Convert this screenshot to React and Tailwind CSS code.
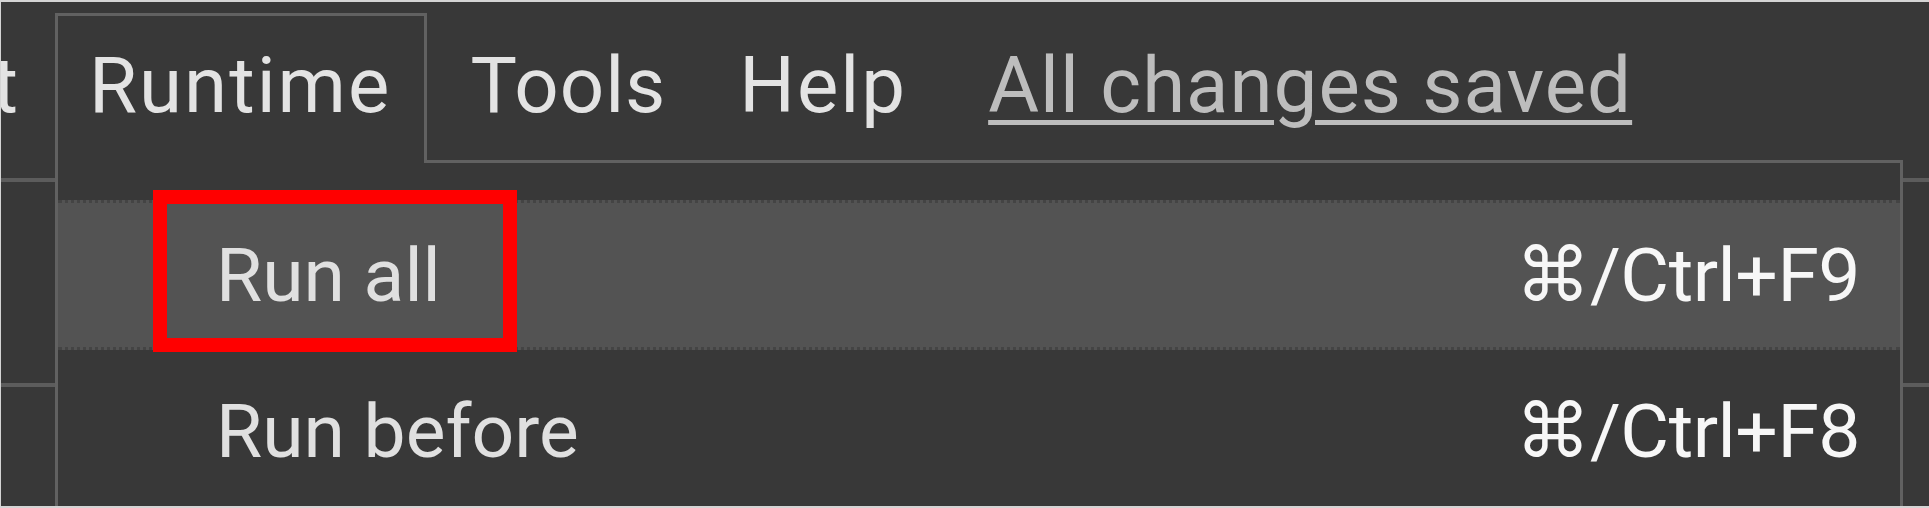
function SideStrip({ wide }) {
  return (
    <div className={wide ? 'flex-1 flex flex-col' : 'w-[54px] flex flex-col'}>
      <div className="h-[18px]" />
      <div className="h-[4px] bg-[#5c5c5c]" />
      <div className="h-[201px]" />
      <div className="h-[4px] bg-[#5c5c5c]" />
    </div>
  )
}

function MenuRow({ label, shortcut, active }) {
  if (active) {
    return (
      <div className="relative h-[150px] bg-[#535353] border-y-[3px] border-dotted border-[#444444] flex items-start justify-between pl-[158px] pr-[40px] pt-[35px]">
        <span className="text-[#e0e0e0]">{label}</span>
        <span className="text-[#f7f7f7] tracking-[-0.5px]">{shortcut}</span>
        {/* annotation box */}
        <div className="absolute left-[95px] top-[-13px] w-[364px] h-[162px] border-[14px] border-[#ff0000]" />
      </div>
    )
  }
  return (
    <div className="flex items-start justify-between pl-[158px] pr-[40px] pt-[44px]">
      <span className="text-[#e0e0e0]">{label}</span>
      <span className="text-[#f7f7f7] tracking-[-0.5px]">{shortcut}</span>
    </div>
  )
}

export default function App() {
  return (
    <div className="w-[1929px] h-[508px] overflow-hidden bg-[#383838] border-t-2 border-b-2 border-l border-[#d4d4d4] flex flex-col font-['Roboto','DejaVu_Sans',sans-serif]">
      {/* menubar */}
      <div className="h-[158px] shrink-0 flex items-start text-[78px] leading-[78px] text-[#e3e3e3] tracking-[2px] whitespace-nowrap">
        <div className="w-[54px] h-full overflow-hidden flex justify-end pr-[35px] pt-[45px]">
          <span>Edit</span>
        </div>
        <div className="relative z-10 mt-[11px] h-[150px] bg-[#383838] border-x-[3px] border-t-[3px] border-[#616161] pl-[31px] pr-[33px] pt-[31px]">
          Runtime
        </div>
        <div className="ml-[43px] pt-[45px] tracking-[1px]">Tools</div>
        <div className="ml-[73px] pt-[45px]">Help</div>
        <div className="ml-[81px] pt-[45px] tracking-[1px] text-[#bdbdbd] underline decoration-[5px] underline-offset-[8px]">
          All changes saved
        </div>
      </div>

      {/* dropdown */}
      <div className="flex flex-1 min-h-0">
        <SideStrip />
        <div className="w-[1848px] border-x-[3px] border-t-[3px] border-[#616161] pt-[37px] flex flex-col whitespace-nowrap text-[75px] leading-[75px]">
          <MenuRow label="Run all" shortcut="⌘/Ctrl+F9" active />
          <MenuRow label="Run before" shortcut="⌘/Ctrl+F8" />
        </div>
        <SideStrip wide />
      </div>
    </div>
  )
}
